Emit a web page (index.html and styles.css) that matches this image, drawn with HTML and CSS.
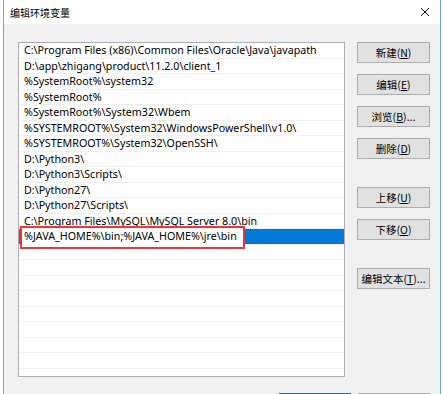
FILE: index.html
```html
<!DOCTYPE html>
<html lang="zh-CN">
<head>
    <meta charset="UTF-8">
    <title>编辑环境变量</title>
    <link rel="stylesheet" href="styles.css">
</head>
<body>
    <div class="window">
        <!-- Title bar -->
        <div class="titlebar">
            <span class="title">编辑环境变量</span>
            <svg class="close" width="10" height="10" viewBox="0 0 10 10">
                <path d="M1 1 L9 9 M9 1 L1 9" stroke="#111" stroke-width="1" fill="none"/>
            </svg>
        </div>

        <div class="content">
            <!-- Path list -->
            <div class="listbox">
                <div class="row">C:\Program Files (x86)\Common Files\Oracle\Java\javapath</div>
                <div class="row">D:\app\zhigang\product\11.2.0\client_1</div>
                <div class="row">%SystemRoot%\system32</div>
                <div class="row">%SystemRoot%</div>
                <div class="row">%SystemRoot%\System32\Wbem</div>
                <div class="row">%SYSTEMROOT%\System32\WindowsPowerShell\v1.0\</div>
                <div class="row">%SYSTEMROOT%\System32\OpenSSH\</div>
                <div class="row">D:\Python3\</div>
                <div class="row">D:\Python3\Scripts\</div>
                <div class="row">D:\Python27\</div>
                <div class="row">D:\Python27\Scripts\</div>
                <div class="row">C:\Program Files\MySQL\MySQL Server 8.0\bin</div>
                <div class="row selected">
                    <span class="edit">%JAVA_HOME%\bin;%JAVA_HOME%\jre\bin</span>
                </div>
                <div class="row"></div>
                <div class="row"></div>
                <div class="row"></div>
                <div class="row"></div>
                <div class="row"></div>
                <div class="row"></div>
                <div class="row"></div>
                <div class="row"></div>
                <div class="row"></div>
                <div class="mark"></div>
            </div>

            <!-- Side buttons -->
            <div class="actions">
                <button>新建(<u>N</u>)</button>
                <button>编辑(<u>E</u>)</button>
                <button>浏览(<u>B</u>)...</button>
                <button>删除(<u>D</u>)</button>
                <button class="sep">上移(<u>U</u>)</button>
                <button>下移(<u>O</u>)</button>
                <button class="sep">编辑文本(<u>T</u>)...</button>
            </div>
        </div>

        <!-- OK / Cancel, only their top edge is in view -->
        <div class="footer">
            <button class="default" aria-label="确定"></button>
            <button aria-label="取消"></button>
        </div>
    </div>
</body>
</html>
```

FILE: styles.css
```css
body {
    margin: 0;
    background: #fff;
    overflow: hidden;
    font-family: "Noto Sans", "Noto Sans CJK SC", sans-serif;
    height: 394px;
}
.window {
    margin-left: 3px;
    width: 436px;
    height: 420px;
    border-left: 1px solid #6fa8dc;
    border-right: 1px solid #6fa8dc;
    background: #f0f0f0;
}
.titlebar {
    height: 24px;
    background: #fff;
    display: flex;
    align-items: center;
    justify-content: space-between;
    padding: 0 10px 0 6px;
}
.title {
    font-family: "Noto Sans CJK SC", sans-serif;
    font-size: 10px;
    color: #000;
}
.close {
    display: block;
}
.content {
    display: flex;
    padding: 18px 0 0 14px;
}
.listbox {
    position: relative;
    width: 325px;
    height: 333px;
    border: 1px solid #abadb3;
    background: #fff;
    overflow: hidden;
}
.row {
    height: 15.5px;
    box-sizing: border-box;
    border-bottom: 1px solid #f0f0f0;
    padding-left: 5px;
    font-size: 10.7px;
    line-height: 14.5px;
    color: #000;
    white-space: nowrap;
}
.row.selected {
    display: flex;
    background: #0078d7;
    padding-left: 2px;
    overflow: visible;
}
.edit {
    width: 219px;
    height: 19px;
    padding-left: 3px;
    background: #fff;
    line-height: 14.5px;
}
.mark {
    position: absolute;
    left: 1px;
    top: 183px;
    width: 221px;
    height: 19px;
    border: 2px solid #e8383d;
}
.actions {
    display: flex;
    flex-direction: column;
    gap: 11px;
    margin-left: 12px;
}
button {
    width: 73px;
    height: 21px;
    margin: 0;
    padding: 0;
    border: 1px solid #adadad;
    background: #e1e1e1;
    font-family: "Noto Sans CJK SC", sans-serif;
    font-size: 10.5px;
    color: #000;
}
button u {
    text-underline-offset: 1px;
}
.sep {
    margin-top: 17px;
}
.footer {
    display: flex;
    justify-content: flex-end;
    gap: 7px;
    padding: 16px 10px 0 0;
}
.footer button {
    width: 72px;
}
.footer .default {
    border-color: #0078d7;
}
```
